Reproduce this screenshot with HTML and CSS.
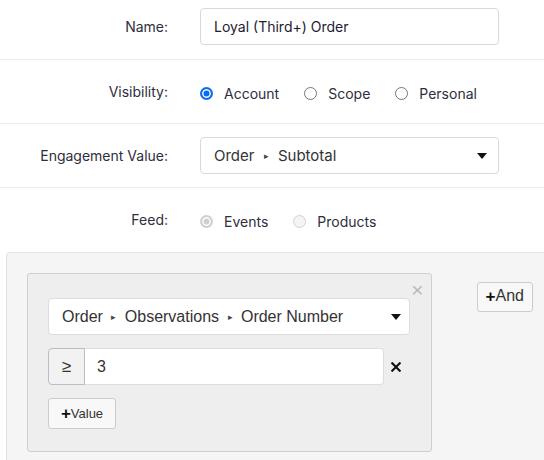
FILE: index.html
```html
<!DOCTYPE html>
<html lang="en">
<head>
    <meta charset="UTF-8">
    <meta name="viewport" content="width=device-width, initial-scale=1.0">
    <title>Edit Segment</title>
    <link rel="stylesheet" href="styles.css">
</head>
<body>
    <form class="segment-form">
        <div class="form-row first">
            <label class="form-label" for="segName">Name:</label>
            <div class="form-field">
                <input type="text" id="segName" class="text-input" value="Loyal (Third+) Order">
            </div>
        </div>

        <div class="form-row">
            <span class="form-label">Visibility:</span>
            <div class="form-field radios">
                <label class="radio"><span class="dot checked"></span>Account</label>
                <label class="radio"><span class="dot"></span>Scope</label>
                <label class="radio"><span class="dot"></span>Personal</label>
            </div>
        </div>

        <div class="form-row">
            <span class="form-label">Engagement Value:</span>
            <div class="form-field">
                <div class="select-box">
                    <span>Order <i class="sep">&#9656;</i> Subtotal</span>
                    <span class="caret"></span>
                </div>
            </div>
        </div>

        <div class="form-row last">
            <span class="form-label">Feed:</span>
            <div class="form-field radios">
                <label class="radio disabled"><span class="dot checked"></span>Events</label>
                <label class="radio disabled"><span class="dot"></span>Products</label>
            </div>
        </div>
    </form>

    <div class="rules-panel">
        <div class="rule-group">
            <span class="group-close">&times;</span>
            <div class="rule-select">
                <span>Order <i class="sep small">&#9656;</i> Observations <i class="sep small">&#9656;</i> Order Number</span>
                <span class="caret"></span>
            </div>
            <div class="value-row">
                <button type="button" class="op-btn">&ge;</button>
                <input type="text" class="value-input" value="3">
                <span class="value-remove">
                    <svg width="10" height="10" viewBox="0 0 10 10"><path d="M1.3 1.3l7.4 7.4M8.7 1.3l-7.4 7.4" stroke="#111" stroke-width="2.1" stroke-linecap="square"/></svg>
                </span>
            </div>
            <button type="button" class="small-btn"><b class="plus">+</b>Value</button>
        </div>
        <button type="button" class="and-btn"><b class="plus">+</b>And</button>
    </div>
</body>
</html>
```

FILE: styles.css
```css
/* Global */
body {
    margin: 0;
    font-family: Inter, "Noto Sans", sans-serif;
    font-size: 14px;
    color: #24243a;
    background: #fff;
    overflow-x: hidden;
}

/* Top form */
.form-row {
    display: grid;
    grid-template-columns: 168px 299px;
    column-gap: 32px;
    align-items: center;
    padding: 13px 0;
    border-bottom: 1px solid #ebebeb;
}

.form-row.first {
    padding-top: 8px;
    padding-bottom: 14px;
}

.form-row.last {
    border-bottom: none;
    padding-bottom: 14px;
}

.form-label {
    text-align: right;
    color: #2e2e40;
}

.form-field {
    height: 37px;
    display: flex;
    align-items: center;
}

.text-input {
    box-sizing: border-box;
    width: 100%;
    height: 37px;
    padding: 0 13px;
    border: 1px solid #d9d9d9;
    border-radius: 4px;
    font-family: inherit;
    font-size: 14px;
    color: #1c1c33;
}

.select-box {
    box-sizing: border-box;
    width: 100%;
    height: 37px;
    padding: 0 11px 0 13px;
    border: 1px solid #d9d9d9;
    border-radius: 4px;
    display: flex;
    align-items: center;
    justify-content: space-between;
    font-size: 15px;
    color: #333;
}

.sep {
    font-style: normal;
    font-size: 9px;
    margin: 0 5px;
    vertical-align: 2px;
    color: #444;
}

.sep.small {
    margin: 0 4px;
}

.caret {
    width: 0;
    height: 0;
    border-left: 5px solid transparent;
    border-right: 5px solid transparent;
    border-top: 6px solid #111;
}

/* Radios */
.radios {
    padding-top: 4px;
    box-sizing: border-box;
}

.radio {
    display: flex;
    align-items: center;
    margin-right: 25px;
    color: #2e2e40;
}

.dot {
    box-sizing: border-box;
    width: 13px;
    height: 13px;
    border: 1px solid #767676;
    border-radius: 50%;
    margin-right: 11px;
    background: #fff;
}

.dot.checked {
    border: 2px solid #0b6cf2;
    box-shadow: inset 0 0 0 1.5px #fff;
    background: #0b6cf2;
}

.radio.disabled .dot {
    border-color: #d2d2d2;
    background: #f4f4f4;
}

.radio.disabled .dot.checked {
    border: 2px solid #cfcfcf;
    background: #cfcfcf;
}

/* Rule builder */
.rules-panel {
    display: flex;
    align-items: flex-start;
    margin: 0 -10px 0 6px;
    padding: 20px 20px 8px;
    background: #f5f5f5;
    border: 1px solid #e3e3e3;
    border-bottom: none;
    border-radius: 4px 4px 0 0;
    font-family: "Liberation Sans", Arial, sans-serif;
}

.rule-group {
    position: relative;
    box-sizing: border-box;
    width: 408px;
    padding: 24px 21px 22px 20px;
    background: #eee;
    border: 1px solid #cfcfcf;
    border-radius: 3px;
}

.group-close {
    position: absolute;
    top: 5px;
    right: 7px;
    font-size: 21px;
    line-height: 1;
    color: #b8b8b8;
}

.rule-select {
    box-sizing: border-box;
    height: 37px;
    padding: 0 8px 0 13px;
    background: #fff;
    border: 1px solid #ddd;
    border-radius: 4px;
    display: flex;
    align-items: center;
    justify-content: space-between;
    font-size: 16px;
    color: #333;
}

.value-row {
    display: flex;
    align-items: center;
    margin-top: 13px;
}

.op-btn {
    box-sizing: border-box;
    width: 37px;
    height: 37px;
    padding: 0;
    background: #f2f2f2;
    border: 1px solid #bdbdbd;
    border-radius: 4px 0 0 4px;
    font-family: inherit;
    font-size: 17px;
    color: #333;
}

.value-input {
    box-sizing: border-box;
    width: 299px;
    height: 37px;
    padding: 0 12px;
    background: #fff;
    border: 1px solid #ddd;
    border-left: none;
    border-radius: 0 4px 4px 0;
    font-family: inherit;
    font-size: 16px;
    color: #333;
}

.value-remove {
    display: flex;
    margin-left: 7px;
}

.small-btn {
    margin-top: 13px;
    height: 31px;
    width: 68px;
    padding: 0;
    background: #f8f8f8;
    border: 1px solid #ccc;
    border-radius: 3px;
    font-family: inherit;
    font-size: 13px;
    color: #333;
}

.plus {
    font-size: 17px;
    color: #111;
    vertical-align: -1px;
}

.and-btn {
    margin: 9px 0 0 45px;
    height: 30px;
    width: 57px;
    padding: 0;
    background: #f8f8f8;
    border: 1px solid #ccc;
    border-radius: 3px;
    font-family: inherit;
    font-size: 16px;
    color: #333;
}
```
